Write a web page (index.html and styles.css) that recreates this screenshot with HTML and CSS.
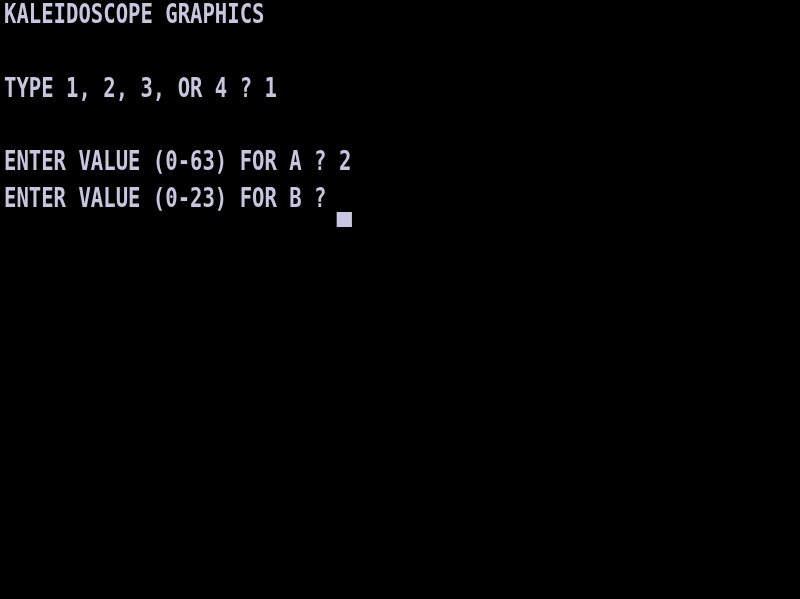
FILE: index.html
```html
<!DOCTYPE html>
<html>
<head>
<meta charset="utf-8">
<link rel="stylesheet" href="styles.css">
<title>Kaleidoscope Graphics</title>
</head>
<body>
<div class="screen">
  <div class="line"><span class="txt">KALEIDOSCOPE GRAPHICS</span></div>
  <div class="line"></div>
  <div class="line"><span class="txt">TYPE 1, 2, 3, OR 4 ? 1</span></div>
  <div class="line"></div>
  <div class="line"><span class="txt">ENTER VALUE (0-63) FOR A ? 2</span></div>
  <div class="line"><span class="txt">ENTER VALUE (0-23) FOR B ? <span class="cursor"></span></span></div>
</div>
</body>
</html>
```
FILE: styles.css
```css
html, body {
  margin: 0;
  padding: 0;
  background: #000;
}
.screen {
  width: 800px;
  height: 599px;
  background: #000;
  padding-left: 4px;
  box-sizing: border-box;
  overflow: hidden;
  filter: blur(0.5px);
}
.line {
  height: 36.8px;
  line-height: 27px;
  white-space: pre;
}
.txt {
  display: inline-block;
  font-family: "DejaVu Sans Mono", monospace;
  font-weight: bold;
  font-size: 27px;
  color: #c8c5df;
  transform: scaleX(0.763);
  transform-origin: 0 0;
}
.cursor {
  display: inline-block;
  width: 20px;
  height: 15px;
  margin-left: -3px;
  background: #c8c6e0;
  vertical-align: -20px;
}
```
